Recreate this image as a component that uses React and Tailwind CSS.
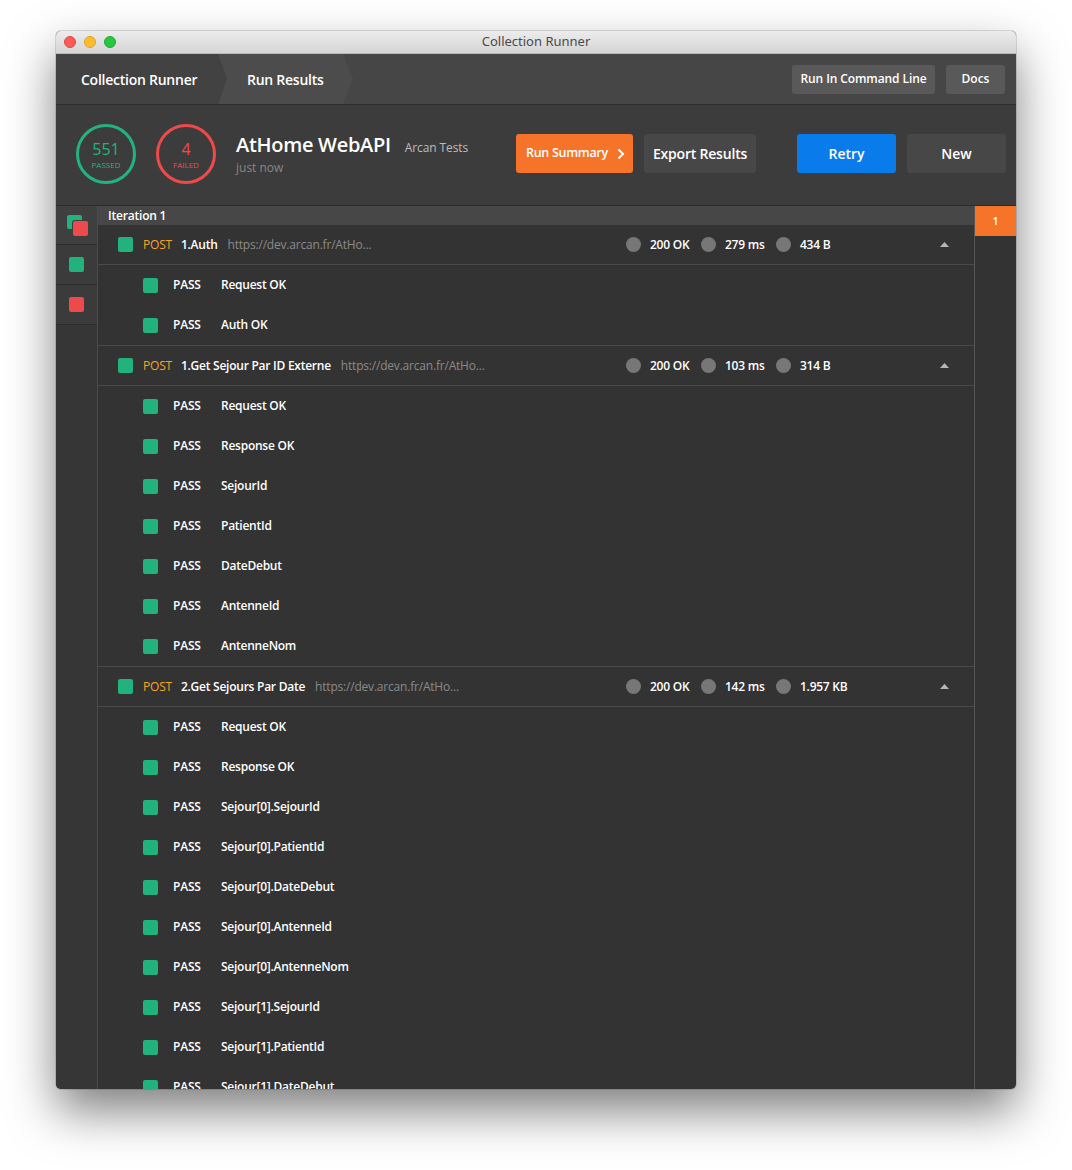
const groups = [
    {
        name: "1.Auth",
        url: "https://dev.arcan.fr/AtHo...",
        status: "200 OK",
        time: "279 ms",
        size: "434 B",
        tests: ["Request OK", "Auth OK"],
    },
    {
        name: "1.Get Sejour Par ID Externe",
        url: "https://dev.arcan.fr/AtHo...",
        status: "200 OK",
        time: "103 ms",
        size: "314 B",
        tests: ["Request OK", "Response OK", "SejourId", "PatientId", "DateDebut", "AntenneId", "AntenneNom"],
    },
    {
        name: "2.Get Sejours Par Date",
        url: "https://dev.arcan.fr/AtHo...",
        status: "200 OK",
        time: "142 ms",
        size: "1.957 KB",
        tests: [
            "Request OK",
            "Response OK",
            "Sejour[0].SejourId",
            "Sejour[0].PatientId",
            "Sejour[0].DateDebut",
            "Sejour[0].AntenneId",
            "Sejour[0].AntenneNom",
            "Sejour[1].SejourId",
            "Sejour[1].PatientId",
            "Sejour[1].DateDebut",
            "Sejour[1].AntenneId",
        ],
    },
];

function Stat({ label }) {
    return (
        <div className="w-[75px] flex items-center">
            <span className="w-[15px] h-[15px] rounded-full bg-[#777777] shrink-0" />
            <span className="ml-[9px] text-[12px] font-semibold text-white whitespace-nowrap tracking-[-0.25px]">{label}</span>
        </div>
    );
}

function Group({ g }) {
    return (
        <div className="border-b border-[#4a4a4a]">
            {/* request row */}
            <div className="h-[40px] flex items-center border-b border-[#4a4a4a]">
                <div className="flex-1 min-w-0 flex items-center pl-[20px]">
                    <span className="w-[15px] h-[15px] rounded-[2px] bg-[#21b27d] shrink-0" />
                    <span className="ml-[10px] text-[12px] text-[#f5a623] tracking-[-0.2px]">POST</span>
                    <span className="ml-[9px] text-[12px] font-semibold text-white whitespace-nowrap tracking-[-0.25px]">{g.name}</span>
                    <span className="ml-[10px] text-[12px] text-[#8a8a8a] whitespace-nowrap tracking-[-0.2px]">{g.url}</span>
                </div>
                <div className="w-[226px] flex">
                    <Stat label={g.status} />
                    <Stat label={g.time} />
                    <Stat label={g.size} />
                </div>
                <div className="w-[122px] flex justify-end pr-[25px]">
                    <svg width="9" height="5" viewBox="0 0 9 5">
                        <path d="M0 5 L4.5 0 L9 5Z" fill="#b5b5b5" />
                    </svg>
                </div>
            </div>
            {/* tests */}
            {g.tests.map((t) => (
                <div key={t} className="h-[40px] flex items-center pl-[45px]">
                    <span className="w-[15px] h-[15px] rounded-[2px] bg-[#21b27d] shrink-0" />
                    <span className="ml-[15px] w-[48px] text-[12px] font-semibold text-white tracking-[-0.2px]">PASS</span>
                    <span className="text-[12px] font-semibold text-white whitespace-nowrap tracking-[-0.25px]">{t}</span>
                </div>
            ))}
        </div>
    );
}

export default function App() {
    return (
        <div className="w-[1072px] h-[1170px] bg-white pt-[31px] pl-[56px] font-['Open_Sans',sans-serif]">
            <div className="w-[960px] h-[1058px] rounded-[5px] overflow-hidden flex flex-col bg-[#333333] shadow-[0_22px_48px_rgba(0,0,0,0.5),0_0_0_1px_rgba(0,0,0,0.12)]">
                {/* title bar */}
                <div className="h-[23px] shrink-0 flex items-center relative bg-gradient-to-b from-[#ececec] to-[#d5d5d5] border-b border-[#b9b9b9]">
                    <div className="flex items-center gap-[8px] pl-[8px]">
                        <span className="w-[12px] h-[12px] rounded-full bg-[#fc5b57] border border-[#e2463f]" />
                        <span className="w-[12px] h-[12px] rounded-full bg-[#fdbc2e] border border-[#e1a325]" />
                        <span className="w-[12px] h-[12px] rounded-full bg-[#27c840] border border-[#1eaa33]" />
                    </div>
                    <div className="flex-1 text-center pr-[60px] text-[13px] text-[#4a4a4a] font-['Noto_Sans',sans-serif]">
                        Collection Runner
                    </div>
                </div>

                {/* nav */}
                <div className="h-[51px] shrink-0 flex items-stretch bg-[#464646] border-b border-[#2e2e2e]">
                    <div className="relative z-10 w-[171px] bg-[#424242] flex items-center pl-[25px] text-[14px] font-semibold text-white tracking-[-0.25px] [clip-path:polygon(0_0,calc(100%-9px)_0,100%_50%,calc(100%-9px)_100%,0_100%)]">
                        Collection Runner
                    </div>
                    <div className="-ml-[9px] w-[135px] bg-[#4c4c4c] flex items-center pl-[29px] text-[14px] font-semibold text-white tracking-[-0.25px] [clip-path:polygon(0_0,calc(100%-10px)_0,100%_50%,calc(100%-10px)_100%,0_100%)]">
                        Run Results
                    </div>
                    <div className="ml-auto flex items-center gap-[11px] pr-[11px]">
                        <button className="h-[29px] w-[143px] rounded-[3px] bg-[#595959] text-[12px] font-semibold text-white tracking-[-0.1px]">
                            Run In Command Line
                        </button>
                        <button className="h-[29px] w-[59px] rounded-[3px] bg-[#595959] text-[12px] font-semibold text-white">
                            Docs
                        </button>
                    </div>
                </div>

                {/* run header */}
                <div className="h-[101px] shrink-0 flex items-center bg-[#3c3c3c] border-b border-[#2b2b2b] pl-[20px] pb-[3px]">
                    <div className="w-[60px] h-[60px] rounded-full border-[3px] border-[#23b37e] flex flex-col items-center justify-center">
                        <span className="text-[16px] leading-[18px] text-[#23b37e] mt-[2px]">551</span>
                        <span className="text-[8px] leading-[10px] text-[#23b37e] mt-[2px]">PASSED</span>
                    </div>
                    <div className="ml-[20px] w-[60px] h-[60px] rounded-full border-[3px] border-[#ee4a4c] flex flex-col items-center justify-center">
                        <span className="text-[16px] leading-[18px] text-[#ee4a4c] mt-[2px]">4</span>
                        <span className="text-[8px] leading-[10px] text-[#ee4a4c] mt-[2px]">FAILED</span>
                    </div>
                    <div className="ml-[20px] flex flex-col mt-[2px]">
                        <div className="flex items-baseline">
                            <span className="text-[20px] leading-[26px] font-semibold text-white tracking-[-0.3px]">AtHome WebAPI</span>
                            <span className="ml-[14px] text-[12px] text-[#bdbdbd] tracking-[-0.1px]">Arcan Tests</span>
                        </div>
                        <span className="mt-[1px] text-[12px] text-[#878787]">just now</span>
                    </div>
                    <div className="ml-auto flex items-center pr-[10px]">
                        <button className="h-[39px] w-[117px] rounded-[3px] bg-[#f5742a] flex items-center pl-[10px] text-[12.5px] font-semibold text-white tracking-[-0.3px]">
                            Run Summary
                            <svg className="ml-[9px]" width="8" height="12" viewBox="0 0 8 12">
                                <path d="M1.5 1.5 L6 6 L1.5 10.5" fill="none" stroke="#ffffff" strokeWidth="2" />
                            </svg>
                        </button>
                        <button className="ml-[11px] h-[39px] w-[112px] rounded-[3px] bg-[#474747] text-[14px] font-semibold text-white tracking-[-0.2px]">
                            Export Results
                        </button>
                        <button className="ml-[41px] h-[39px] w-[99px] rounded-[3px] bg-[#0a7bea] text-[14px] font-semibold text-white">
                            Retry
                        </button>
                        <button className="ml-[11px] h-[39px] w-[99px] rounded-[3px] bg-[#474747] text-[14px] font-semibold text-white">
                            New
                        </button>
                    </div>
                </div>

                {/* results */}
                <div className="flex-1 min-h-0 flex">
                    {/* iteration sidebar */}
                    <div className="w-[42px] shrink-0 bg-[#363636] border-r border-[#4a4a4a] flex flex-col">
                        <div className="h-[39px] bg-[#3f3f3f] border-b border-[#2c2c2c] flex items-center justify-center">
                            <svg width="24" height="24" viewBox="0 0 24 24">
                                <rect x="2" y="2" width="15" height="14" rx="2" fill="#21b27d" />
                                <rect x="7" y="7" width="17" height="17" rx="3" fill="#3f3f3f" />
                                <rect x="8" y="8" width="15" height="15" rx="2" fill="#ee4a4c" />
                            </svg>
                        </div>
                        <div className="h-[40px] bg-[#3b3b3b] border-b border-[#2c2c2c] flex items-center justify-center">
                            <span className="w-[15px] h-[15px] rounded-[2px] bg-[#21b27d]" />
                        </div>
                        <div className="h-[40px] bg-[#3b3b3b] border-b border-[#2c2c2c] flex items-center justify-center">
                            <span className="w-[15px] h-[15px] rounded-[2px] bg-[#ee4a4c]" />
                        </div>
                    </div>

                    {/* main list */}
                    <div className="flex-1 min-w-0 overflow-hidden flex flex-col">
                        <div className="h-[19px] shrink-0 bg-[#474747] flex items-center pl-[10px] text-[12px] font-semibold text-white tracking-[-0.2px]">
                            Iteration 1
                        </div>
                        {groups.map((g) => (
                            <Group key={g.name} g={g} />
                        ))}
                    </div>

                    {/* iteration index */}
                    <div className="w-[42px] shrink-0 border-l border-[#555555] flex flex-col">
                        <div className="h-[30px] bg-[#f5742a] flex items-center justify-center text-[10px] font-semibold text-white">1</div>
                    </div>
                </div>
            </div>
        </div>
    );
}
